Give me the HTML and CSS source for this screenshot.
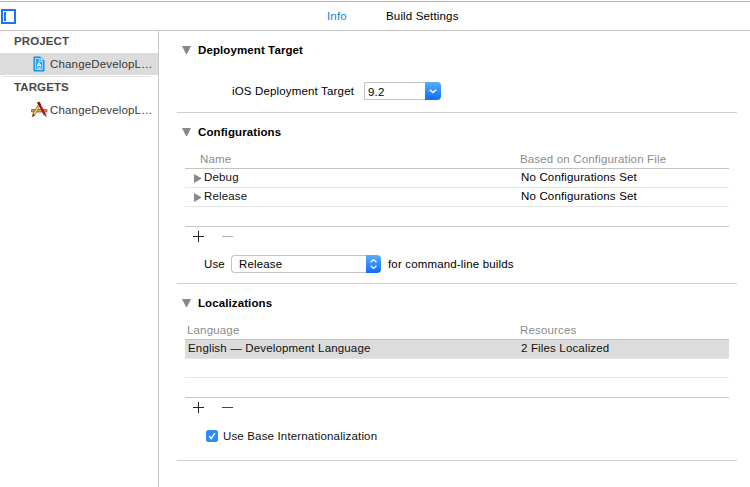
FILE: index.html
```html
<!DOCTYPE html>
<html lang="en">
<head>
<meta charset="utf-8">
<title>Project Info</title>
<link rel="stylesheet" href="styles.css">
</head>
<body>
<header class="topbar">
  <div class="toggle"><i></i></div>
  <nav class="tabs"><span class="tab active">Info</span><span class="tab">Build Settings</span></nav>
</header>
<div class="body">
  <aside class="sidebar">
    <h2>PROJECT</h2>
    <div class="item selected">
      <svg class="icon" width="18" height="18" viewBox="0 0 18 18">
        <path d="M4 2H10.5L14 5.5V16H4Z" fill="#2aa3f3" stroke="#1685dc"/>
        <path d="M5.5 3.5H9.5V6.5H12.5V14.5H5.5Z" fill="none" stroke="#bfe6ff" stroke-width=".8"/>
        <path d="M10.5 2V5.5H14Z" fill="#fff" stroke="#4aaef0" stroke-width=".7"/>
        <path d="M7 11.5L9 7.5L11 11.5M7 10.3H11M7 13H11" fill="none" stroke="#fff"/>
      </svg>
      <span>ChangeDevelopL…</span>
    </div>
    <hr>
    <h2 class="targets">TARGETS</h2>
    <div class="item">
      <svg class="icon" width="18" height="18" viewBox="0 0 18 18">
        <path d="M1.5 8.5H17V11H1.5Z" fill="#c99a62" stroke="#8b5a2e" stroke-width=".8"/>
        <path d="M9.5 3.5L3.2 14.5" stroke="#8c6a18" stroke-width="2.6"/>
        <path d="M9.3 4L3.8 13.6" stroke="#f3d75a" stroke-width="1.5"/>
        <path d="M3 13L1.8 16.5L5 14.2" fill="#4c3020"/>
        <path d="M8.5 1.5L15 14" stroke="#b50f20" stroke-width="2.4"/>
        <path d="M8.2 1L10 4.5" stroke="#8f1420" stroke-width="2.4"/>
        <path d="M14 13.8L16 12.8L16.6 16.6Z" fill="#6b5548"/>
      </svg>
      <span>ChangeDevelopL…</span>
    </div>
  </aside>
  <main class="main">
    <section class="section deploy">
      <h3><i class="down"></i>Deployment Target</h3>
      <div class="field">
        <label>iOS Deployment Target</label>
        <div class="combo"><span>9.2</span>
          <svg width="16" height="18" viewBox="0 0 16 18"><path d="M4.8 7.7L8 10.6L11.2 7.7" fill="none" stroke="#fff" stroke-width="1.4"/></svg>
        </div>
      </div>
    </section>
    <section class="section configs">
      <h3><i class="down"></i>Configurations</h3>
      <div class="table">
        <div class="row head"><span class="name">Name</span><span>Based on Configuration File</span></div>
        <div class="row"><span class="tree"><i class="right"></i>Debug</span><span class="value">No Configurations Set</span></div>
        <div class="row"><span class="tree"><i class="right"></i>Release</span><span class="value">No Configurations Set</span></div>
        <div class="row last"></div>
      </div>
      <div class="tools">
        <svg width="60" height="19" viewBox="0 0 60 19"><path d="M8 9.5H19M13.5 4V15" stroke="#222"/><path d="M37 9.5H48" stroke="#b0b0b0"/></svg>
      </div>
      <div class="use">
        <span class="uselabel">Use</span>
        <div class="select"><span>Release</span>
          <svg width="15" height="18" viewBox="0 0 15 18"><path d="M4.6 7.3L7.5 4.6L10.4 7.3M4.6 10.7L7.5 13.4L10.4 10.7" fill="none" stroke="#fff" stroke-width="1.3"/></svg>
        </div>
        <span class="builds">for command-line builds</span>
      </div>
    </section>
    <section class="section locs">
      <h3><i class="down"></i>Localizations</h3>
      <div class="table">
        <div class="row head"><span class="lang">Language</span><span>Resources</span></div>
        <div class="row chosen"><span class="english">English — Development Language</span><span class="value">2 Files Localized</span></div>
        <div class="row"></div>
        <div class="row last"></div>
      </div>
      <div class="tools">
        <svg width="60" height="19" viewBox="0 0 60 19"><path d="M8 9.5H19M13.5 4V15" stroke="#222"/><path d="M37 9.5H48" stroke="#444"/></svg>
      </div>
      <div class="check">
        <svg width="12" height="12" viewBox="0 0 12 12"><rect width="12" height="12" rx="2.5" fill="#2b8bfb"/><path d="M3.2 6.2L5.2 8.6L8.9 3.2" fill="none" stroke="#fff" stroke-width="1.5"/></svg>
        <span>Use Base Internationalization</span>
      </div>
    </section>
  </main>
</div>
</body>
</html>
```
FILE: styles.css
```css
* { box-sizing: border-box; }
body {
  margin: 0;
  height: 487px;
  overflow: hidden;
  background: #fff;
  color: #111;
  font: 11.5px/18px "Liberation Sans", Arial, sans-serif;
  letter-spacing: 0.16px;
  white-space: nowrap;
}
svg { display: block; flex: none; }
h2, h3 { margin: 0; font-size: 11.5px; letter-spacing: 0.1px; }
.topbar {
  display: flex;
  height: 31px;
  padding-top: 7px;
  border-bottom: 1px solid #c8c8c8;
  background: linear-gradient(#b0b0b0, #b0b0b0) 0 1px / 100% 1px no-repeat;
}
.toggle {
  width: 15px;
  height: 15px;
  margin: 2px 0 0 1px;
  padding: 1px;
  border: 2px solid #1a73ff;
}
.toggle i { display: block; width: 2px; height: 9px; background: #1a73ff; }
.tabs { display: flex; margin-left: 311px; }
.tab { color: #000; }
.tab.active { width: 59px; color: #0b7fe0; }
.body { display: flex; height: 456px; }
.sidebar { width: 159px; border-right: 1px solid #c8c8c8; color: #3a3a3a; }
.sidebar h2 {
  height: 22px;
  padding-left: 14px;
  line-height: 20px;
  color: #4a4a4a;
}
.item { display: flex; align-items: center; height: 22px; padding-left: 30px; }
.item span { margin-left: 2px; }
.selected { background: #dcdcdc; }
.sidebar hr { height: 1px; margin: 1px 8px 0 3px; border: 0; background: #e2e2e2; }
.sidebar .targets { line-height: 21px; }
.main { flex: 1; padding: 0 13px 0 18px; }
.section { border-bottom: 1px solid #cecece; }
.deploy { height: 82px; }
.configs { height: 171px; }
.locs { height: 177px; }
h3 { display: flex; align-items: center; height: 38px; padding-left: 5px; color: #000; }
.down {
  margin-right: 7px;
  border: solid transparent;
  border-width: 8px 4.5px 0;
  border-top-color: #888;
  width: 9px;
}
.right {
  margin: 3px 3px 0 9px;
  border: solid transparent;
  border-width: 4.5px 0 4.5px 7px;
  border-left-color: #888;
}
.field { display: flex; align-items: center; height: 18px; margin-top: 13px; padding-left: 55px; color: #000; }
.field label { width: 132px; }
.combo { display: flex; width: 77px; height: 18px; }
.combo span { flex: 1; padding-left: 3px; border: 1px solid #c4c4c4; border-right: 0; }
.combo svg, .select svg { background: linear-gradient(#5aaefb, #0d6cfb); border-radius: 0 4px 4px 0; }
.table { margin: 0 8px; }
.row { display: grid; grid-template-columns: 335px 1fr; height: 19px; line-height: 16px; border-bottom: 1px solid #e8e8e8; }
.head { height: 18px; line-height: 17px; color: #8c8c8c; border-color: #c4c4c4; }
.last { height: 20px; border-color: #c8c8c8; }
.name { padding-left: 15px; }
.lang { padding-left: 2px; }
.tree { display: flex; height: 16px; }
.tree .right { height: 9px; margin-top: 5px; }
.value { padding-left: 1px; color: #000; }
.english { padding-left: 3px; }
.chosen { background: #dcdcdc; }
.chosen .value { color: #111; }
.tools { height: 19px; padding-left: 8px; }
.use { display: flex; height: 18px; margin-top: 9px; padding-left: 27px; color: #000; }
.uselabel { width: 27px; }
.select {
  display: flex;
  width: 150px;
  height: 18px;
}
.select span { flex: 1; padding-left: 7px; line-height: 17px; border: 1px solid #c4c4c4; border-right: 0; border-radius: 4px 0 0 4px; }
.builds { margin-left: 7px; }
.check { display: flex; align-items: center; height: 12px; margin-top: 13px; padding-left: 29px; }
.check span { margin-left: 5px; }
```
